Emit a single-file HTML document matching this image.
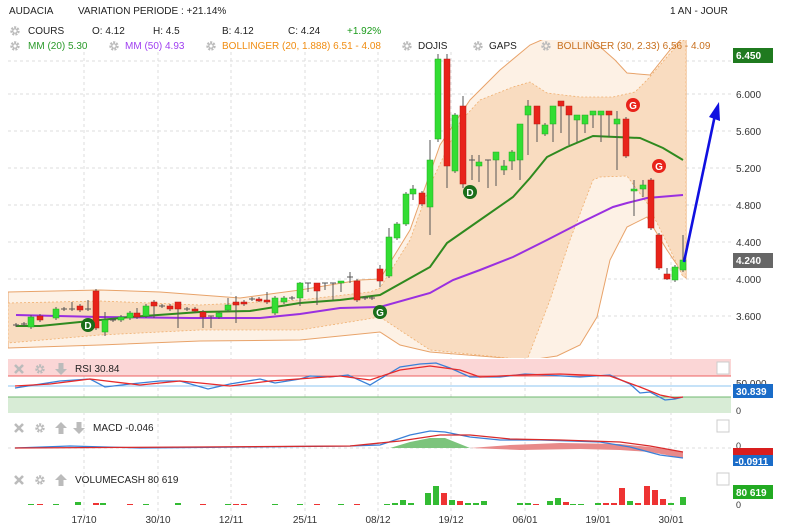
<!DOCTYPE html>
<html><head><meta charset="utf-8">
<style>
html,body{margin:0;padding:0;background:#fff;width:785px;height:532px;overflow:hidden}
svg{display:block;font-family:"Liberation Sans",sans-serif}
</style></head><body>
<svg id="s" width="785" height="532" viewBox="0 0 785 532" xmlns="http://www.w3.org/2000/svg">
<defs>
<g id="gear"><circle r="3.6" fill="none" stroke="#bbb" stroke-width="2.2" stroke-dasharray="2 1.2"/><circle r="2.2" fill="none" stroke="#bbb" stroke-width="1.2"/></g>
<g id="xx"><path d="M-4,-4L4,4M4,-4L-4,4" stroke="#bbb" stroke-width="2.6"/></g>
<g id="up"><path d="M0,-6L6,0H2.5V6H-2.5V0H-6Z" fill="#bbb"/></g>
<g id="dn"><path d="M0,6L6,0H2.5V-6H-2.5V0H-6Z" fill="#bbb"/></g>
<clipPath id="cp"><rect x="8" y="40" width="723" height="318"/></clipPath>
</defs>
<!-- grid -->
<g stroke="#ddd" stroke-dasharray="3 3" stroke-width="1">
<line x1="8" x2="731" y1="94" y2="94"/><line x1="8" x2="731" y1="131" y2="131"/><line x1="8" x2="731" y1="168" y2="168"/>
<line x1="8" x2="731" y1="205" y2="205"/><line x1="8" x2="731" y1="242" y2="242"/><line x1="8" x2="731" y1="279" y2="279"/>
<line x1="8" x2="731" y1="316" y2="316"/><line x1="8" x2="731" y1="61" y2="61"/>
<g id="vg"></g>
</g>
<!-- bollinger -->
<g clip-path="url(#cp)">
<path d="M8,292 L100,290 L160,292 L240,298 L300,290 L360,280 L380,279 L410,230 L440,145 L470,100 L500,70 L530,45 L560,32 L590,38 L615,60 L627,73 L650,75 L670,50 L686,35 L686,278 L667,250 L647,217 L627,227 L610,260 L597,317 L580,345 L557,356 L530,360 L430,352 L400,345 L380,332 L300,340 L200,341 L100,345 L8,348Z" fill="#fdf1e5" stroke="#e8a36a" stroke-width="1"/>
<path d="M8,303 L100,301 L200,305 L300,300 L370,292 L380,288 L410,240 L430,185 L460,122 L480,100 L513,87 L530,82 L547,93 L580,97 L613,97 L635,92 L647,80 L673,50 L686,38 L686,277 L683,277 L667,243 L647,203 L627,176 L600,177 L593,180 L570,240 L550,300 L527,360 L430,350 L380,317 L300,330 L200,330 L100,335 L8,343Z" fill="#f9dcc0" stroke="#f0b070" stroke-width="0.8" stroke-dasharray="2 2"/>
</g>
<!-- header -->
<g font-size="10" fill="#222">
<text x="9" y="14">AUDACIA</text>
<text x="78" y="14">VARIATION PERIODE : +21.14%</text>
<text x="670" y="14">1 AN - JOUR</text>
<use href="#gear" x="15" y="31"/>
<text x="28" y="34">COURS</text>
<text x="92" y="34">O: 4.12</text>
<text x="153" y="34">H: 4.5</text>
<text x="222" y="34">B: 4.12</text>
<text x="288" y="34">C: 4.24</text>
<text x="347" y="34" fill="#1a9a1a">+1.92%</text>
<use href="#gear" x="15" y="46"/>
<text x="28" y="49" fill="#2a9a2a">MM (20)  5.30</text>
<use href="#gear" x="114" y="46"/>
<text x="125" y="49" fill="#a040f0">MM (50)  4.93</text>
<use href="#gear" x="211" y="46"/>
<text x="222" y="49" fill="#f08c10">BOLLINGER (20, 1.888)  6.51 - 4.08</text>
<use href="#gear" x="407" y="46"/>
<text x="418" y="49">DOJIS</text>
<use href="#gear" x="478" y="46"/>
<text x="489" y="49">GAPS</text>
<use href="#gear" x="546" y="46"/>
<text x="557" y="49" fill="#c8701e">BOLLINGER (30, 2.33)  6.56 - 4.09</text>
</g>
<!-- MAs -->
<polyline fill="none" stroke="#9a30e0" stroke-width="2" points="16,315 100,317 190,318 260,318 300,314 340,308 380,307 430,293 453,280 480,270 513,257 547,240 580,223 613,207 627,203 647,198 683,195"/>
<polyline fill="none" stroke="#2f8a1f" stroke-width="2" points="16,326 40,326 100,320 130,317 200,312 250,311 300,303 340,300 380,295 430,267 447,243 480,220 513,197 530,178 547,157 567,147 593,136 640,138 663,148 683,160"/>
<g id="candles"></g>
<!-- markers -->
<g font-size="10" font-weight="bold" fill="#fff" text-anchor="middle">
<circle cx="88" cy="325" r="7" fill="#1a6e1a"/><text x="88" y="329">D</text>
<circle cx="380" cy="312" r="7" fill="#1a6e1a"/><text x="380" y="316">G</text>
<circle cx="470" cy="192" r="7" fill="#1a6e1a"/><text x="470" y="196">D</text>
<circle cx="633" cy="105" r="7" fill="#e8231a"/><text x="633" y="109">G</text>
<circle cx="659" cy="166" r="7" fill="#e8231a"/><text x="659" y="170">G</text>
</g>
<path d="M684,262 L715,115" stroke="#1010e0" stroke-width="2.6"/>
<path d="M719,102 L720,121 L709,117Z" fill="#1010e0"/>
<!-- right axis -->
<g font-size="10" fill="#333">
<text x="736" y="98">6.000</text><text x="736" y="135">5.600</text><text x="736" y="172">5.200</text>
<text x="736" y="209">4.800</text><text x="736" y="246">4.400</text><text x="736" y="283">4.000</text><text x="736" y="320">3.600</text>
</g>
<rect x="733" y="48" width="40" height="15" fill="#1f7a1f"/><text x="736" y="59" font-size="10" font-weight="bold" fill="#fff">6.450</text>
<rect x="733" y="253" width="40" height="15" fill="#666"/><text x="736" y="264" font-size="10" font-weight="bold" fill="#fff">4.240</text>
<!-- RSI -->
<rect x="8" y="359" width="723" height="17" fill="#fbd6d6"/>
<line x1="8" x2="731" y1="376" y2="376" stroke="#ee6060"/>
<line x1="8" x2="731" y1="386" y2="386" stroke="#8cc4f0"/>
<rect x="8" y="397" width="723" height="16" fill="#d8ecd6"/>
<line x1="8" x2="731" y1="397" y2="397" stroke="#70b870"/>
<rect x="717" y="362" width="12" height="12" fill="#fff" stroke="#ccc"/>
<use href="#xx" x="19" y="369"/><use href="#gear" x="40" y="369"/><use href="#dn" x="61" y="369"/>
<text x="75" y="372" font-size="10" fill="#222">RSI  30.84</text>
<polyline fill="none" stroke="#3a80d8" stroke-width="1.3" points="15,388 60,381 90,379 105,387 130,384 160,381 180,381 208,389 230,384 260,379 275,383 300,379 310,376 330,377 348,375 370,385 385,376 400,367 420,364 436,363 450,368 470,377 500,377 525,374 545,375 580,377 610,375 630,384 640,393 650,392 665,400 675,399 683,397"/>
<polyline fill="none" stroke="#e82a2a" stroke-width="1.3" points="15,386 50,384 90,379 140,385 180,381 230,386 270,381 340,376 370,380 400,370 430,366 460,370 480,377 520,375 560,374 610,376 640,387 660,395 675,398 683,397"/>
<text x="736" y="387" font-size="10" fill="#333">50.000</text>
<rect x="733" y="384" width="40" height="14" fill="#1a6cc8"/><text x="736" y="395" font-size="10" font-weight="bold" fill="#fff">30.839</text>
<text x="736" y="414" font-size="9" fill="#333">0</text>
<!-- MACD -->
<rect x="717" y="420" width="12" height="12" fill="#fff" stroke="#ccc"/>
<use href="#xx" x="19" y="428"/><use href="#gear" x="40" y="428"/><use href="#up" x="61" y="428"/><use href="#dn" x="79" y="428"/>
<text x="93" y="431" font-size="10" fill="#222">MACD  -0.046</text>
<line x1="8" x2="731" y1="448" y2="448" stroke="#ddd" stroke-dasharray="3 3"/>
<path d="M390,448 L410,442 L430,438 L445,438 L470,448Z" fill="#7cc47c"/>
<path d="M470,448 L520,450 L580,449 L620,450 L650,452 L683,458 L683,452 L650,447 L620,444 L560,443 L510,445Z" fill="#e88a8a"/>
<polyline fill="none" stroke="#3a80d8" stroke-width="1.3" points="15,448 70,446 140,448 250,447 350,446 380,445 410,435 430,431 445,432 470,437 500,440 540,440 600,442 630,447 660,455 683,458"/>
<polyline fill="none" stroke="#d82a2a" stroke-width="1.3" points="15,448 200,447 350,446 400,441 440,435 470,435 510,439 560,440 620,442 650,446 683,452"/>
<text x="736" y="449" font-size="9" fill="#333">0</text>
<rect x="733" y="448" width="40" height="8" fill="#d81e1e"/>
<rect x="733" y="455" width="40" height="11" fill="#1a6cc8"/><text x="735" y="465" font-size="10" font-weight="bold" fill="#fff">-0.0911</text>
<!-- Volume -->
<rect x="717" y="473" width="12" height="12" fill="#fff" stroke="#ccc"/>
<use href="#xx" x="19" y="480"/><use href="#gear" x="40" y="480"/><use href="#up" x="61" y="480"/>
<text x="75" y="483" font-size="10" fill="#222">VOLUMECASH  80 619</text>
<g id="vol"></g>
<rect x="733" y="485" width="40" height="14" fill="#22aa22"/><text x="736" y="496" font-size="10" font-weight="bold" fill="#fff">80 619</text>
<text x="736" y="508" font-size="9" fill="#333">0</text>
<!-- dates -->
<g font-size="10" fill="#333" text-anchor="middle">
<text x="84" y="523">17/10</text><text x="158" y="523">30/10</text><text x="231" y="523">12/11</text><text x="305" y="523">25/11</text>
<text x="378" y="523">08/12</text><text x="451" y="523">19/12</text><text x="525" y="523">06/01</text><text x="598" y="523">19/01</text><text x="671" y="523">30/01</text>
</g>
</svg>
<script>
var NS="http://www.w3.org/2000/svg";
function el(p,t,a){var e=document.createElementNS(NS,t);for(var k in a)e.setAttribute(k,a[k]);p.appendChild(e);return e;}
var vg=document.getElementById('vg');
[84,158,231,305,378,451,525,598,671].forEach(function(x){el(vg,'line',{x1:x,x2:x,y1:52,y2:515});});
var C=[[16,325,325,'d'],[24,324,324,'d'],[31,317,327,'g'],[40,316,320,'r'],[56,309,318,'g'],[64,309,309,'d'],[72,309,309,'d',302],[80,306,310,'r'],[88,309,309,'d',300],
[96,291,328,'r'],[105,320,332,'g',312,336],[113,320,320,'d'],[121,317,320,'g'],[130,313,318,'g'],[137,313,317,'r',308],[146,306,316,'g'],[154,302,306,'r',300,318],[162,306,306,'d'],
[170,306,309,'r'],[178,302,309,'r',302,328],[187,309,309,'d'],[195,309,311,'r'],[203,312,317,'r',310,328],[211,316,316,'d',316,328],[219,313,317,'g'],[228,305,310,'g',298],[236,302,305,'r',296,323],
[244,302,304,'r'],[252,299,299,'d'],[259,299,300,'r'],[267,300,302,'r',292],[275,298,313,'g'],[284,298,302,'g'],[292,298,298,'d'],[300,283,298,'g',282,306],[308,283,283,'d',283,292],
[317,283,291,'r',283,305],[325,283,283,'d',283,290],[333,283,283,'d',283,300],[341,281,283,'g',281,292],[350,277,277,'d',272,283],[357,281,300,'r'],[365,298,298,'d'],[372,298,298,'d'],
[380,269,281,'r',265,287],[389,237,276,'g',228],[397,224,238,'g'],[406,194,224,'g'],[413,189,194,'g',185,200],[422,193,204,'r'],[430,160,207,'g',140,235],[438,59,139,'g',54,142],
[447,59,166,'r',54,188],[455,115,171,'g'],[463,106,184,'r',96,188],[472,160,160,'d',155,180],[479,162,166,'g',155,182],[488,160,160,'d',160,188],[496,152,160,'g',152,186],[504,166,170,'g',160,175],
[512,152,161,'g',150,170],[520,124,160,'g',124,180],[528,106,115,'g',100,155],[537,106,124,'r',106,142],[545,125,134,'g'],[553,106,124,'g',106,142],[561,101,106,'r',101,133],[569,106,115,'r',106,145],
[577,115,120,'g',115,142],[585,115,124,'g',115,133],[593,111,115,'g',111,128],[601,111,115,'g',111,142],[609,111,115,'r',111,137],[617,119,124,'g',111,170],[626,119,156,'r'],
[634,189,191,'g',180,216],[643,185,189,'g',180,197],[651,180,228,'r'],[659,235,268,'r'],[667,274,279,'r',268,280],[675,267,280,'g'],[683,260,270,'g',235,272]];
var cg=document.getElementById('candles');
C.forEach(function(c){var x=c[0],t=c[1],b=c[2],k=c[3];var wt=c[4]!==undefined?c[4]:t-2,wb=c[5]!==undefined?c[5]:b+2;
el(cg,'line',{x1:x,x2:x,y1:wt,y2:wb,stroke:'#555','stroke-width':1});
if(k=='d'){el(cg,'line',{x1:x-3,x2:x+3,y1:t,y2:t,stroke:'#555','stroke-width':1});}
else el(cg,'rect',{x:x-3,y:t,width:6,height:Math.max(2,b-t),fill:k=='g'?'#33dd33':'#e8231a',stroke:k=='g'?'#22aa22':'#b81a10','stroke-width':0.5});});
var V=[[31,1,'g'],[40,1,'r'],[56,1,'g'],[78,3,'g'],[96,2,'r'],[103,2,'g'],[130,1,'r'],[146,1,'g'],[178,2,'g'],[203,1,'r'],[228,1,'g'],[236,1,'r'],[244,1,'r'],[275,1,'g'],[300,1,'g'],[317,1,'r'],[341,1,'g'],[357,1,'r'],
[387,1,'g'],[395,2,'g'],[403,5,'g'],[411,2,'g'],[428,12,'g'],[436,19,'g'],[444,12,'r'],[452,5,'g'],[460,4,'r'],[468,2,'g'],[476,2,'g'],[484,4,'g'],[520,2,'g'],[528,2,'g'],[536,1,'r'],
[550,4,'g'],[558,7,'g'],[566,3,'r'],[573,1,'g'],[581,1,'g'],[598,2,'g'],[606,2,'r'],[614,2,'r'],[622,17,'r'],[630,4,'g'],[638,2,'r'],[647,19,'r'],[655,15,'r'],[663,6,'r'],[671,2,'g'],[683,8,'g']];
var vgp=document.getElementById('vol');
V.forEach(function(v){el(vgp,'rect',{x:v[0]-3,y:505-v[1],width:6,height:v[1],fill:v[2]=='g'?'#33bb33':'#ee3333'});});
</script>
</body></html>
